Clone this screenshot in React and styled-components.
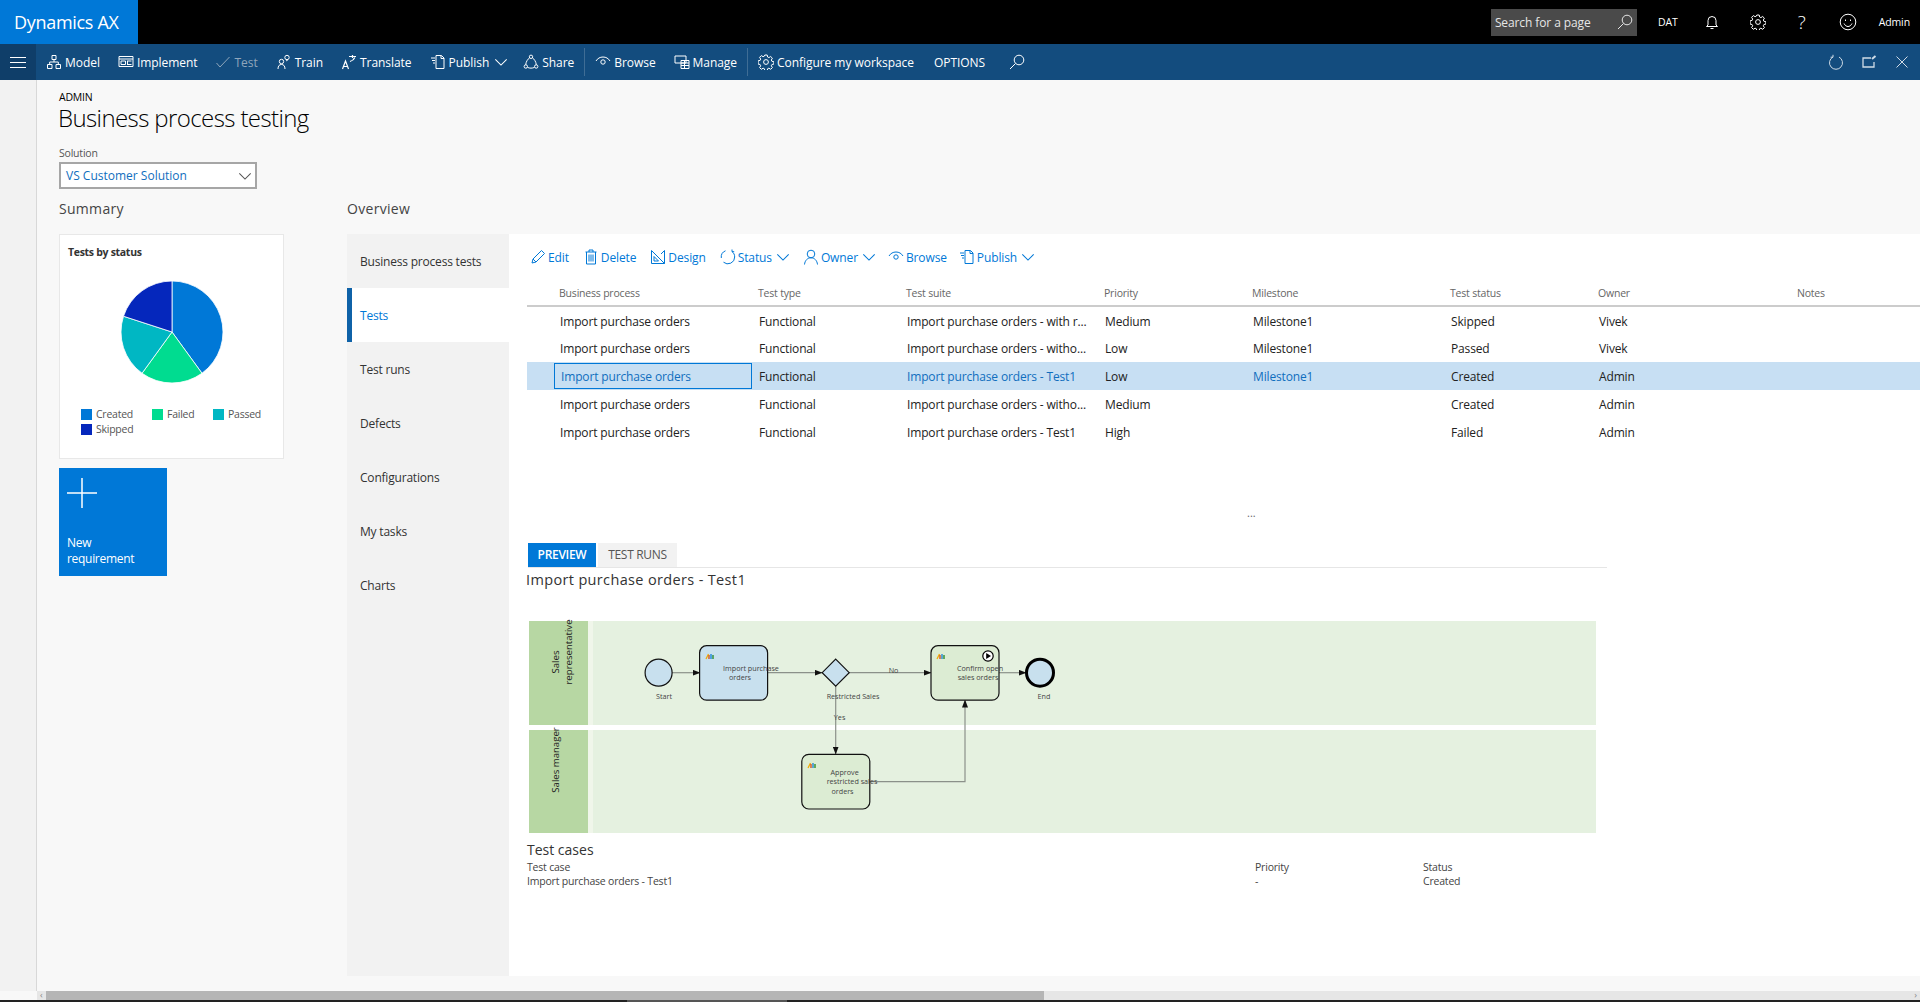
import React from 'react'
import styled, { createGlobalStyle } from 'styled-components'

const GlobalStyle = createGlobalStyle`
  html, body { margin: 0; padding: 0; height: 100%; overflow: hidden; }
  body { font-family: "Open Sans", "Noto Sans", "Liberation Sans", sans-serif; background: #f8f8f8; color: #000; }
  * { box-sizing: border-box; }
`

const Page = styled.div`
  height: 1002px;
  display: flex;
  flex-direction: column;
  overflow: hidden;
`

const TopBar = styled.header`
  height: 44px;
  flex: none;
  background: #000;
  display: flex;
  align-items: center;
  color: #fff;
`

const Logo = styled.div`
  width: 138px;
  height: 44px;
  background: #0078d7;
  font-size: 18px;
  line-height: 44px;
  padding-left: 14px;
  letter-spacing: -0.3px;
`

const SearchBox = styled.div`
  margin-left: auto;
  width: 146px;
  height: 27px;
  background: #4a4a4a;
  display: flex;
  align-items: center;
  justify-content: space-between;
  padding: 0 4px 0 4px;
  font-size: 12px;
  letter-spacing: -0.1px;
  color: #e6e6e6;
`

const TopItems = styled.div`
  display: flex;
  align-items: center;
  margin-left: 21px;
  margin-right: 10px;
`

const TopText = styled.span`
  font-size: 10.5px;
  letter-spacing: -0.1px;
  margin-left: ${p => p.$left || 0}px;
`

const HelpMark = styled.span`
  font-size: 19px;
  line-height: 20px;
  font-weight: 300;
  margin-left: ${p => p.$left || 0}px;
`

const TopIcon = styled.span`
  display: flex;
  margin-left: ${p => p.$left || 0}px;
`

const NavBar = styled.nav`
  height: 36px;
  flex: none;
  background: #134c7e;
  color: #fff;
  display: flex;
  align-items: center;
  font-size: 12px;
  letter-spacing: -0.05px;
`

const Burger = styled.button`
  width: 36px;
  height: 36px;
  border: 0;
  padding: 0 10px;
  background: #0f3e69;
  display: flex;
  flex-direction: column;
  justify-content: center;
  gap: 4px;
  margin-right: 10px;
  span { display: block; height: 1px; background: #fff; }
`

const NavItem = styled.a`
  display: flex;
  align-items: center;
  gap: 3px;
  margin-right: ${p => p.$gap ?? 18}px;
  white-space: nowrap;
  color: ${p => (p.$muted ? '#8fa6bb' : '#fff')};
`

const NavSep = styled.span`
  width: 1px;
  height: 28px;
  background: #3f6d95;
  margin-right: 10px;
  margin-left: -8px;
`

const NavRight = styled.div`
  margin-left: auto;
  display: flex;
  align-items: center;
  gap: 17px;
  padding-right: 10px;
  color: #cfdbe6;
`

const Ico = styled.svg`
  width: ${p => p.$size || 16}px;
  height: ${p => p.$size || 16}px;
  flex: none;
  fill: none;
  stroke: currentColor;
  stroke-width: 1;
`

const ChevronIco = styled(Ico)`
  margin-left: 2px;
`

const Body = styled.div`
  flex: 1;
  display: flex;
  min-height: 0;
`

const Rail = styled.aside`
  width: 37px;
  flex: none;
  background: #f2f2f2;
  border-right: 1px solid #d8d8d8;
`

const Content = styled.main`
  flex: 1;
  display: flex;
  flex-direction: column;
  min-width: 0;
  padding: 11px 0 0 22px;
`

const Crumb = styled.div`
  font-size: 10.5px;
  line-height: 12px;
  letter-spacing: -0.2px;
`

const Title = styled.h1`
  margin: 0 0 0 -1px;
  font-size: 24px;
  line-height: 30px;
  font-weight: 300;
  letter-spacing: -0.6px;
`

const FieldLabel = styled.label`
  display: block;
  margin: 13px 0 2px;
  font-size: 10.5px;
  line-height: 14px;
  color: #555;
  letter-spacing: -0.2px;
`

const Select = styled.div`
  width: 198px;
  height: 27px;
  border: 2px solid #a6a6a6;
  background: #fff;
  display: flex;
  align-items: center;
  justify-content: space-between;
  padding: 0 3px 0 5px;
  font-size: 12px;
  color: #106ebe;
  svg { color: #555; }
`

const Columns = styled.div`
  display: flex;
  margin-top: 9px;
  height: 778px;
`

const SummaryCol = styled.section`
  width: 288px;
  flex: none;
`

const OverviewCol = styled.section`
  flex: 1;
  min-width: 0;
  display: flex;
  flex-direction: column;
`

const SectionTitle = styled.h2`
  margin: 0 0 15px;
  height: 21px;
  font-size: 14px;
  line-height: 21px;
  font-weight: 400;
  color: #444;
  letter-spacing: 0.3px;
`

const ChartCard = styled.div`
  width: 225px;
  height: 225px;
  background: #fff;
  border: 1px solid #e8e8e8;
  padding: 10px 8px;
`

const ChartTitle = styled.div`
  font-size: 10.5px;
  font-weight: 700;
  line-height: 14px;
  color: #333;
  letter-spacing: -0.3px;
`

const PieWrap = styled.div`
  display: flex;
  justify-content: center;
  margin: 21px 0 0;
  height: 116px;
`

const Legend = styled.div`
  display: grid;
  grid-template-columns: 71px 61px 1fr;
  row-gap: 1px;
  padding-left: 13px;
  margin-top: 11px;
`

const LegendItem = styled.div`
  display: flex;
  align-items: center;
  gap: 4px;
  height: 14px;
  font-size: 10.5px;
  color: #555;
  letter-spacing: -0.25px;
  i { width: 11px; height: 11px; background: ${p => p.$color}; }
`

const Tile = styled.button`
  display: flex;
  flex-direction: column;
  justify-content: space-between;
  align-items: flex-start;
  width: 108px;
  height: 108px;
  margin-top: 9px;
  border: 0;
  background: #0078d7;
  color: #fff;
  padding: 10px 8px 9px;
  font: 400 12px/16px "Open Sans", sans-serif;
  letter-spacing: -0.3px;
  text-align: left;
`

const Split = styled.div`
  flex: 1;
  display: flex;
  min-height: 0;
`

const SideTabs = styled.div`
  width: 162px;
  flex: none;
  background: #f2f2f2;
`

const SideTab = styled.div`
  height: 54px;
  display: flex;
  align-items: center;
  font-size: 12px;
  letter-spacing: -0.2px;
  color: ${p => (p.$active ? '#0078d7' : '#333')};
  background: ${p => (p.$active ? '#fff' : 'transparent')};
  border-left: 5px solid ${p => (p.$active ? '#0f62a8' : 'transparent')};
  padding-left: 8px;
`

const Panel = styled.div`
  flex: 1;
  min-width: 0;
  background: #fff;
  padding-left: 18px;
`

const Toolbar = styled.div`
  height: 46px;
  display: flex;
  align-items: center;
  padding-left: 3px;
  font-size: 12px;
  letter-spacing: -0.12px;
  color: #0078d7;
`

const ToolItem = styled.a`
  display: flex;
  align-items: center;
  gap: 2px;
  margin-right: ${p => p.$gap ?? 14}px;
  white-space: nowrap;
`

const Row = styled.div`
  display: grid;
  grid-template-columns: 27px 199px 148px 198px 148px 198px 148px 199px 1fr;
  align-items: center;
  height: ${p => p.$h}px;
  background: ${p => (p.$selected ? '#c7dff3' : 'transparent')};
  font-size: 12px;
  letter-spacing: -0.15px;
  color: #222;
`

const HeaderRow = styled(Row)`
  border-bottom: 2px solid #ccc;
  color: #666;
  font-size: 10.5px;
  letter-spacing: -0.2px;
`

const Cell = styled.div`
  grid-column: ${p => p.$col};
  padding-left: ${p => (p.$header ? 5 : 6)}px;
  white-space: nowrap;
  overflow: hidden;
  color: ${p => (p.$link ? '#106ebe' : 'inherit')};
  ${p => p.$focus && `
    height: 26px;
    line-height: 25px;
    margin-right: 1px;
    border: 1px solid #0078d7;
  `}
`

const Dots = styled.div`
  height: 97px;
  padding: 60px 0 0 720px;
  font-size: 11px;
  line-height: 14px;
  color: #666;
`

const TabStrip = styled.div`
  width: 1079px;
  display: flex;
  gap: 2px;
  border-bottom: 1px solid #e6e6e6;
  height: 25px;
  margin-left: 1px;
`

const TabButton = styled.div`
  width: ${p => p.$w}px;
  height: 24px;
  text-align: center;
  font-size: 12px;
  line-height: 24px;
  letter-spacing: -0.3px;
  background: ${p => (p.$active ? '#0078d7' : '#f2f2f2')};
  color: ${p => (p.$active ? '#fff' : '#555')};
  font-weight: ${p => (p.$active ? 600 : 400)};
`

const PreviewTitle = styled.h3`
  margin: 0 0 0 -1px;
  height: 50px;
  font-size: 14.5px;
  line-height: 24px;
  font-weight: 400;
  color: #333;
  letter-spacing: 0.35px;
`

const Diagram = styled.svg`
  display: block;
  margin-left: 2px;
  width: 1067px;
  height: 218px;
  flex: none;
  text { font-family: "Open Sans", sans-serif; fill: #444; }
`

const LaneName = styled.text`
  font-size: 9.6px;
  text-anchor: middle;
  fill: #222 !important;
`

const CasesTitle = styled.h3`
  margin: 4px 0 0;
  font-size: 14px;
  line-height: 20px;
  font-weight: 400;
  color: #333;
`

const CaseRow = styled.div`
  display: grid;
  grid-template-columns: 728px 168px 1fr;
  font-size: 10.5px;
  line-height: 14px;
  letter-spacing: -0.2px;
  color: #444;
`

const ScrollBar = styled.div`
  flex: none;
  height: 9px;
  margin-left: 37px;
  padding: 0 3px;
  background: #e6e6e6;
  position: relative;
  display: flex;
  justify-content: space-between;
  font-size: 9px;
  line-height: 8px;
  color: #888;
  &::before {
    content: '';
    position: absolute;
    left: 9px;
    top: 0;
    bottom: 0;
    width: 998px;
    background: #b5b5b5;
  }
`

const BottomEdge = styled.div`
  flex: none;
  height: 2px;
  background: linear-gradient(90deg, #222 627px, #555 627px, #555 787px, #222 787px);
`

// icons, all on a 16 box
const Chevron = ({ size = 14 }) => (
  <ChevronIco viewBox="0 0 16 16" $size={size}><path d="M1.5 5l6.5 6.5L14.5 5" strokeWidth="1.2" /></ChevronIco>
)
const Model = () => (
  <Ico viewBox="0 0 16 16"><path d="M6 1.5h4v4H6zM1.5 10.5h4.5v4H1.500zM10 10.5h4.5v4H10zM8 5.5v2.5M3.7 10.5V8h8.6v2.5" /></Ico>
)
const Implement = () => (
  <Ico viewBox="0 0 16 16"><path d="M1 2.5h14v10H1zM1 5h14M3 7h4.500v3.5H3zM9 7h4.5M9 10.5h4.5M9.5 7v3.5" /></Ico>
)
const Check = () => (
  <Ico viewBox="0 0 16 16"><path d="M1.5 9l3.5 4L14.500 3" /></Ico>
)
const Train = () => (
  <Ico viewBox="0 0 16 16"><circle cx="11" cy="3.5" r="2.2" /><circle cx="5.5" cy="7.5" r="2.2" /><path d="M2 15c0-3 1.2-4.5 3.5-4.5S9 12 9 15M10 7c.6-.5 1-.6 1.6-.6" /></Ico>
)
const Translate = () => (
  <Ico viewBox="0 0 16 16"><path d="M1.5 15l3-8 3 8M2.7 12.5h3.6M8 2.5h7M11.5 1v3M9 7.5c2.5-.7 4-2 4.8-4" strokeWidth="1.2" /></Ico>
)
const Publish = () => (
  <Ico viewBox="0 0 16 16"><path d="M6 1.5h5.5L14 4v10.5H6zM11 1.5V4.5h3M1 4h4M2 6.5h3M3 9h2" /></Ico>
)
const Share = () => (
  <Ico viewBox="0 0 16 16"><circle cx="8" cy="2.8" r="1.7" /><circle cx="2.8" cy="12.5" r="1.7" /><circle cx="13.2" cy="12.5" r="1.7" /><path d="M6.6 3.8C4.5 5.3 3 7.8 2.7 10.8M9.4 3.8c2.1 1.5 3.6 4 3.9 7M4.5 13.4c2.2 1 4.8 1 7 0" /></Ico>
)
const Browse = () => (
  <Ico viewBox="0 0 16 16"><circle cx="8" cy="8" r="2.2" /><path d="M1 7c1.6-2.6 4-4 7-4s5.4 1.4 7 4" /></Ico>
)
const Manage = () => (
  <Ico viewBox="0 0 16 16"><path d="M1 2h11v7H1zM7 6.5h8v8H7zM7 9h8M7 11.5h8M10.5 6.5v8" /></Ico>
)
const Gear = ({ size = 16 }) => (
  <Ico viewBox="0 0 16 16" $size={size}>
    <circle cx="8" cy="8" r="2.4" />
    <path d="M6.8 1h2.4l.4 2 1.3.6 1.8-1.1 1.700 1.700-1.100 1.800.6 1.300 2 .4v2.400l-2 .4-.6 1.300 1.100 1.800-1.700 1.700-1.800-1.100-1.300.6-.4 2H6.800l-.4-2-1.300-.6-1.800 1.100-1.700-1.700 1.100-1.800-.6-1.300-2-.4V6.800l2-.4.6-1.300-1.100-1.800 1.700-1.700 1.800 1.100 1.300-.6z" />
  </Ico>
)
const Search = ({ size = 16 }) => (
  <Ico viewBox="0 0 16 16" $size={size}><circle cx="10" cy="6" r="4.8" /><path d="M6.5 9.5L1 15" /></Ico>
)
const Bell = () => (
  <Ico viewBox="0 0 16 16"><path d="M4 11V6.5a4 4 0 018 0V11l1.500 1.500h-11zM6.500 14.500h3" /></Ico>
)
const Smile = () => (
  <Ico viewBox="0 0 18 18" $size={18}><circle cx="9" cy="9" r="7.8" /><path d="M5 10.5c1 2 2.5 3 4 3s3-1 4-3M6.5 6.5v1.5M11.5 6.5v1.5" /></Ico>
)
const Refresh = () => (
  <Ico viewBox="0 0 16 16"><path d="M5 3a6.5 6.5 0 106 0M5 .8V3.2H2.6" /></Ico>
)
const Popout = () => (
  <Ico viewBox="0 0 16 16"><path d="M10 4H2v9h11V8" strokeWidth="1.3" /><path d="M11 5l3.5-3" strokeWidth="2" /></Ico>
)
const Close = () => (
  <Ico viewBox="0 0 16 16"><path d="M2.5 2.5l11 11M13.5 2.5l-11 11" /></Ico>
)
const Edit = () => (
  <Ico viewBox="0 0 16 16"><path d="M2 14l1-4L11.5 1.5l3 3L6 13zM3 10l3 3" /></Ico>
)
const Trash = () => (
  <Ico viewBox="0 0 16 16"><path d="M2.5 3h11M6 3V1h4v2M3.5 3v12h9V3M6 5.5v7M8 5.5v7M10 5.5v7" /></Ico>
)
const Design = () => (
  <Ico viewBox="0 0 16 16"><path d="M1.5 14.5V1.500l13 13zM4 7.5v4.500h4.500zM14.500 14.500V1.500L11 5" /></Ico>
)
const Status = () => (
  <Ico viewBox="0 0 16 16"><path d="M5.5 1.8A6.8 6.8 0 001.3 9M3.500 13.200A6.800 6.800 0 0014.700 8c0-2.300-1-4.200-2.700-5.500M12 .5v2.200h2.200" /></Ico>
)
const Owner = () => (
  <Ico viewBox="0 0 16 16"><circle cx="8" cy="5" r="3.8" /><path d="M1.5 15.5c.4-4 3-6.700 6.500-6.700s6.100 2.700 6.500 6.700" /></Ico>
)

const NAV = [
  { label: 'Model', icon: <Model /> },
  { label: 'Implement', icon: <Implement /> },
  { label: 'Test', icon: <Check />, muted: true },
  { label: 'Train', icon: <Train /> },
  { label: 'Translate', icon: <Translate /> },
  { label: 'Publish', icon: <Publish />, chevron: true, gap: 15 },
  { label: 'Share', icon: <Share />, sep: true },
  { label: 'Browse', icon: <Browse /> },
  { label: 'Manage', icon: <Manage />, sep: true },
  { label: 'Configure my workspace', icon: <Gear />, gap: 20 },
  { label: 'OPTIONS', gap: 24 },
]

const TOOLS = [
  { label: 'Edit', icon: <Edit /> },
  { label: 'Delete', icon: <Trash /> },
  { label: 'Design', icon: <Design /> },
  { label: 'Status', icon: <Status />, chevron: true, gap: 13 },
  { label: 'Owner', icon: <Owner />, chevron: true, gap: 12 },
  { label: 'Browse', icon: <Browse />, gap: 12 },
  { label: 'Publish', icon: <Publish />, chevron: true },
]

const HEADERS = ['Business process', 'Test type', 'Test suite', 'Priority', 'Milestone', 'Test status', 'Owner', 'Notes']

const ROWS = [
  ['Import purchase orders', 'Functional', 'Import purchase orders - with r...', 'Medium', 'Milestone1', 'Skipped', 'Vivek', ''],
  ['Import purchase orders', 'Functional', 'Import purchase orders - witho...', 'Low', 'Milestone1', 'Passed', 'Vivek', ''],
  ['Import purchase orders', 'Functional', 'Import purchase orders - Test1', 'Low', 'Milestone1', 'Created', 'Admin', ''],
  ['Import purchase orders', 'Functional', 'Import purchase orders - witho...', 'Medium', '', 'Created', 'Admin', ''],
  ['Import purchase orders', 'Functional', 'Import purchase orders - Test1', 'High', '', 'Failed', 'Admin', ''],
]

const SIDE = ['Business process tests', 'Tests', 'Test runs', 'Defects', 'Configurations', 'My tasks', 'Charts']

const PIE = [
  { name: 'Created', value: 2, color: '#0078d7' },
  { name: 'Failed', value: 1, color: '#00dc90' },
  { name: 'Passed', value: 1, color: '#00b7c3' },
  { name: 'Skipped', value: 1, color: '#0527bc' },
]

function slicePath (from, to, r) {
  const a = (from - 90) * Math.PI / 180
  const b = (to - 90) * Math.PI / 180
  const large = to - from > 180 ? 1 : 0
  return `M0 0L${r * Math.cos(a)} ${r * Math.sin(a)}A${r} ${r} 0 ${large} 1 ${r * Math.cos(b)} ${r * Math.sin(b)}Z`
}

function Pie () {
  const total = PIE.reduce((s, p) => s + p.value, 0)
  let angle = 0
  return (
    <svg width="104" height="104" viewBox="-52 -52 104 104">
      {PIE.map(p => {
        const from = angle
        angle += p.value / total * 360
        return <path key={p.name} d={slicePath(from, angle, 51)} fill={p.color} stroke="#fff" strokeWidth="0.8" />
      })}
    </svg>
  )
}

const Bars = ({ x, y }) => (
  <g transform={`translate(${x} ${y})`}>
    <path d="M0 5L2.5 0" stroke="#f2a900" strokeWidth="1.2" />
    <path d="M3 5V1" stroke="#d83b01" strokeWidth="1.2" />
    <path d="M5 5V0" stroke="#0078d7" strokeWidth="1.2" />
    <path d="M7 5V1" stroke="#107c10" strokeWidth="1.2" />
  </g>
)

const Label = ({ x, y, children, size = 7.2, anchor = 'middle' }) => (
  <text x={x} y={y} fontSize={size} textAnchor={anchor}>{children}</text>
)

function BpmnDiagram () {
  const line = { stroke: '#8b918a', strokeWidth: 1.2, fill: 'none', markerEnd: 'url(#head)' }
  const shape = { stroke: '#111', strokeWidth: 1.2 }
  return (
    <Diagram viewBox="529 618 1067 218">
      <defs>
        <marker id="head" markerWidth="8" markerHeight="6" refX="7.5" refY="3" orient="auto" markerUnits="userSpaceOnUse">
          <path d="M0 0L8 3L0 6Z" fill="#111" />
        </marker>
      </defs>
      <rect x="529" y="621" width="59" height="104" fill="#b7d7a3" />
      <rect x="588" y="621" width="5" height="104" fill="#f0f6ea" />
      <rect x="593" y="621" width="1003" height="104" fill="#e5f1e0" />
      <rect x="529" y="730" width="59" height="103" fill="#b7d7a3" />
      <rect x="588" y="730" width="5" height="103" fill="#f0f6ea" />
      <rect x="593" y="730" width="1003" height="103" fill="#e5f1e0" />

      <LaneName transform="translate(559 662) rotate(-90)">Sales</LaneName>
      <LaneName transform="translate(572 652) rotate(-90)">representative</LaneName>
      <LaneName transform="translate(559 760) rotate(-90)">Sales manager</LaneName>

      <path d="M672 672.7H700" {...line} />
      <path d="M767.5 672.7H822" {...line} />
      <path d="M849 672.7H931" {...line} />
      <path d="M999 672.7H1026" {...line} />
      <path d="M835.7 686V754" {...line} />
      <path d="M869 781.7H965V700" {...line} />

      <circle cx="658.6" cy="672.7" r="13.5" fill="#c8e0ee" {...shape} />
      <rect x="699.6" y="645.7" width="68" height="54.5" rx="7" fill="#c8e0ee" {...shape} />
      <path d="M835.7 659.2L849.2 672.7L835.7 686.2L822.2 672.7Z" fill="#c8e0ee" {...shape} />
      <rect x="931" y="645.7" width="68" height="54.5" rx="7" fill="#dcecd3" {...shape} />
      <circle cx="1040" cy="672.7" r="13.5" fill="#c8e0ee" stroke="#000" strokeWidth="3" />
      <rect x="801.8" y="754.3" width="68" height="54.7" rx="7" fill="#dcecd3" {...shape} />

      <circle cx="988" cy="656" r="5.2" fill="#fff" stroke="#000" strokeWidth="1.2" />
      <path d="M986.2 653L991 656L986.2 659Z" fill="#000" />
      <Bars x={706} y={654} />
      <Bars x={937} y={654} />
      <Bars x={808} y={763} />

      <Label x={664} y={699}>Start</Label>
      <Label x={751} y={671}>Import purchase</Label>
      <Label x={740} y={680}>orders</Label>
      <Label x={853} y={699}>Restricted Sales</Label>
      <Label x={893.5} y={673}>No</Label>
      <Label x={839.6} y={720}>Yes</Label>
      <Label x={980} y={671}>Confirm open</Label>
      <Label x={978} y={680}>sales orders</Label>
      <Label x={1044} y={699}>End</Label>
      <Label x={844.6} y={775}>Approve</Label>
      <Label x={852} y={784}>restricted sales</Label>
      <Label x={842.5} y={794}>orders</Label>
    </Diagram>
  )
}

export default function App () {
  return (
    <Page>
      <GlobalStyle />
      <TopBar>
        <Logo>Dynamics AX</Logo>
        <SearchBox>Search for a page <Search /></SearchBox>
        <TopItems>
          <TopText>DAT</TopText>
          <TopIcon $left={26}><Bell /></TopIcon>
          <TopIcon $left={30}><Gear /></TopIcon>
          <HelpMark $left={32}>?</HelpMark>
          <TopIcon $left={33}><Smile /></TopIcon>
          <TopText $left={22}>Admin</TopText>
        </TopItems>
      </TopBar>

      <NavBar>
        <Burger aria-label="menu"><span /><span /><span /></Burger>
        {NAV.map(item => (
          <React.Fragment key={item.label}>
            <NavItem $muted={item.muted} $gap={item.gap}>
              {item.icon}
              {item.label}
              {item.chevron && <Chevron />}
            </NavItem>
            {item.sep && <NavSep />}
          </React.Fragment>
        ))}
        <NavItem><Search /></NavItem>
        <NavRight>
          <Refresh />
          <Popout />
          <Close />
        </NavRight>
      </NavBar>

      <Body>
        <Rail />
        <Content>
          <Crumb>ADMIN</Crumb>
          <Title>Business process testing</Title>
          <FieldLabel>Solution</FieldLabel>
          <Select>VS Customer Solution <Chevron /></Select>

          <Columns>
            <SummaryCol>
              <SectionTitle>Summary</SectionTitle>
              <ChartCard>
                <ChartTitle>Tests by status</ChartTitle>
                <PieWrap><Pie /></PieWrap>
                <Legend>
                  {PIE.map(p => (
                    <LegendItem key={p.name} $color={p.color}><i />{p.name}</LegendItem>
                  ))}
                </Legend>
              </ChartCard>
              <Tile>
                <svg width="30" height="30" viewBox="0 0 30 30" stroke="#fff" strokeWidth="1.5">
                  <path d="M15 0V30M0 15H30" />
                </svg>
                <span>New<br />requirement</span>
              </Tile>
            </SummaryCol>

            <OverviewCol>
              <SectionTitle>Overview</SectionTitle>
              <Split>
                <SideTabs>
                  {SIDE.map(s => <SideTab key={s} $active={s === 'Tests'}>{s}</SideTab>)}
                </SideTabs>
                <Panel>
                  <Toolbar>
                    {TOOLS.map(t => (
                      <ToolItem key={t.label} $gap={t.gap}>
                        {t.icon}
                        {t.label}
                        {t.chevron && <Chevron />}
                      </ToolItem>
                    ))}
                  </Toolbar>
                  <HeaderRow $h={27}>
                    {HEADERS.map((h, i) => <Cell key={h} $col={i + 2} $header>{h}</Cell>)}
                  </HeaderRow>
                  {ROWS.map((r, ri) => (
                    <Row key={ri} $h={ri === 1 ? 27 : 28} $selected={ri === 2}>
                      {r.map((c, i) => (
                        <Cell
                          key={i}
                          $col={i + 2}
                          $focus={ri === 2 && i === 0}
                          $link={ri === 2 && (i === 0 || i === 2 || i === 4)}
                        >
                          {c}
                        </Cell>
                      ))}
                    </Row>
                  ))}
                  <Dots>...</Dots>
                  <TabStrip>
                    <TabButton $active $w={68}>PREVIEW</TabButton>
                    <TabButton $w={79}>TEST RUNS</TabButton>
                  </TabStrip>
                  <PreviewTitle>Import purchase orders - Test1</PreviewTitle>
                  <BpmnDiagram />
                  <CasesTitle>Test cases</CasesTitle>
                  <CaseRow><span>Test case</span><span>Priority</span><span>Status</span></CaseRow>
                  <CaseRow><span>Import purchase orders - Test1</span><span>-</span><span>Created</span></CaseRow>
                </Panel>
              </Split>
            </OverviewCol>
          </Columns>
        </Content>
      </Body>

      <ScrollBar><span>‹</span><span>›</span></ScrollBar>
      <BottomEdge />
    </Page>
  )
}
